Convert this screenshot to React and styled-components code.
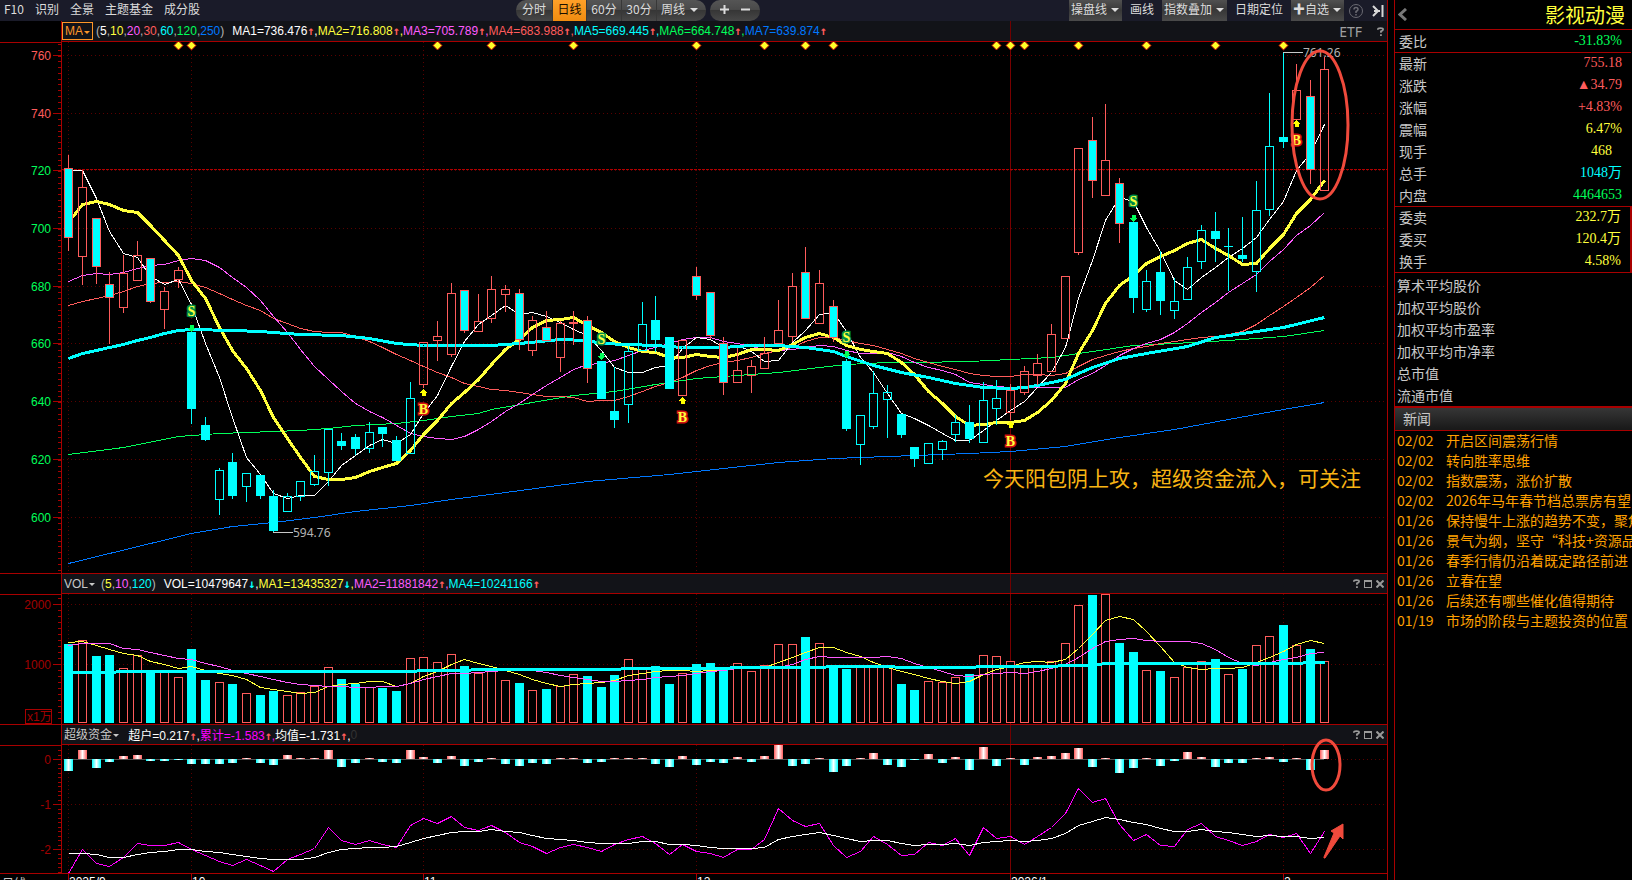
import { useId } from "react";
import styled, { createGlobalStyle, css } from "styled-components";

const RED = "#ff5c5c";
const CYAN = "#00ffff";
const YELLOW = "#ffff3c";
const MAGENTA = "#ff5cff";
const GREEN = "#00ff5a";
const BLUE = "#0078ff";
const WHITE = "#ffffff";
const LINE = "#a80000";
const GRID = "#5a0000";

const GlobalStyle = createGlobalStyle`
* {
  box-sizing: border-box;
}
body {
  margin: 0;
  background: #000;
  color: #c8c8c8;
  font-family: "Noto Sans CJK SC", sans-serif;
  font-size: 12px;
  overflow: hidden;
}
button, select {
  font: inherit;
  color: inherit;
  background: none;
  border: 0;
  padding: 0;
  margin: 0;
}
`;

/* ---------- layout ---------- */

const Page = styled.div`
display: flex;
height: 100vh;
overflow: hidden;
`;

const Main = styled.main`
flex: 1;
min-width: 0;
position: relative;
border-right: 1px solid ${LINE};
overflow: hidden;
`;

const Toolbar = styled.div`
display: flex;
height: 21px;
background: #1a1b29;
color: #dcdcdc;
line-height: 18px;
`;

const Links = styled.nav`
flex: 0 0 516px;
display: flex;
gap: 11px;
padding-left: 4px;

a {
  color: inherit;
  text-decoration: none;
}
`;

const Pill = styled.div`
display: flex;
height: 21px;
margin-right: 4px;
border-radius: 10px;
overflow: hidden;
background: linear-gradient(#555 0, #4a4a4a 45%, #363636 50%, #484848 100%);
`;

const PillButton = styled.button`
width: ${({ $width }) => $width || 35}px;
line-height: 18px;
padding-bottom: 3px;
border-right: 1px solid #383838;
${({ $active }) =>
  $active &&
  css`
    color: #1a1000;
    background: linear-gradient(#ffa028, #f08c10);
  `}
`;

const ZoomButton = styled.button`
width: 21px;
height: 19px;
display: flex;
align-items: center;
justify-content: center;
&:first-child { margin-left: 4px; }
&:last-child { margin-right: 4px; }
`;

const ToolbarRight = styled.div`
margin-left: auto;
display: flex;
`;

const selectKinds = {
  bar: css`
    height: 21px;
    align-items: flex-start;
    padding: 0 2px;
    background: linear-gradient(#505050, #383838 50%, #4a4a4a);
    select { padding-right: 12px; }
    &::after { right: 3px; }
  `,
  pill: css`
    height: 21px;
    align-items: flex-start;
    padding: 0 8px 0 4px;
    select { padding-right: 12px; }
    &::after { right: 8px; }
  `,
  boxed: css`
    height: 18px;
    margin-right: 3px;
    padding: 0 1px 0 2px;
    border: 1px solid #ff9628;
    &::after { right: 2px; }
  `,
  plain: css`
    padding: 0 4px 0 2px;
    &::after { right: 6px; }
  `,
};

const SelectWrap = styled.label`
position: relative;
display: inline-flex;
align-items: center;
color: ${({ $color }) => $color || "inherit"};

select {
  appearance: none;
  outline: none;
  line-height: 18px;
  padding-right: 8px;
}

&::after {
  content: "";
  position: absolute;
  top: 8px;
  border: ${({ $kind }) => ($kind === "bar" || $kind === "pill" ? 4 : 3)}px solid transparent;
  border-top-color: currentColor;
  border-bottom-width: 0;
  pointer-events: none;
}

${({ $kind }) => selectKinds[$kind || "plain"]}
`;

const FlatButton = styled.button`
padding: 0 8px 3px;
line-height: 18px;
`;

const IconButton = styled.button`
display: flex;
align-items: center;
justify-content: center;
width: ${({ $width }) => $width || 12}px;
color: ${({ $color }) => $color || "#9a9a9a"};
`;

const Panel = styled.section`
display: grid;
grid-template-columns: 62px minmax(0, 1fr);
border-bottom: 1px solid ${LINE};
`;

const AxisColumn = styled.div`
border-right: 1px solid ${LINE};
padding-top: ${({ $top }) => $top}px;

svg {
  display: block;
  border-top: 1px solid ${LINE};
}
`;

const PanelHeader = styled.header`
display: flex;
align-items: center;
height: ${({ $height }) => $height}px;
background: linear-gradient(#700000, #700000) 948px 0 / 1px 100% no-repeat, #121318;
border-bottom: 1px solid ${LINE};
font-family: "Liberation Sans", "Noto Sans CJK SC", sans-serif;
font-size: 12px;
white-space: pre;
`;

const Legend = styled.span`
color: ${({ $color }) => $color};
`;

const Arrow = styled(Legend)`
display: inline-block;
width: 7px;
font-family: "DejaVu Sans Mono", monospace;
font-weight: 700;
line-height: 14px;
`;

const Params = styled.span`
margin-right: 8px;
color: #b4b4b4;
`;

const HeaderTools = styled.div`
margin-left: auto;
display: flex;
padding-right: 1px;
`;

const Etf = styled.button`
font-family: "Noto Sans", sans-serif;
font-size: 14px;
color: #a0a0a0;
margin-right: 12px;
`;

const Plot = styled.svg`
display: block;
width: 100%;
height: ${({ $height }) => $height}px;
shape-rendering: crispEdges;
`;

const TimeAxis = styled.footer`
display: grid;
grid-template-columns: 62px minmax(0, 1fr);
align-items: start;
height: 20px;
`;

const Overlay = styled.svg`
position: absolute;
inset: 0;
width: 100%;
height: 100%;
pointer-events: none;
`;

/* ---------- side panel ---------- */

const Side = styled.aside`
flex: 0 0 238px;
margin-left: 6px;
border-left: 1px solid ${LINE};
overflow: hidden;
font-size: 14px;
`;

const SideTitle = styled.div`
display: flex;
align-items: center;
justify-content: space-between;
height: 30px;
padding: 0 7px 0 3px;
border-bottom: 1px solid ${LINE};

h1 {
  margin: 0;
  font-size: 20px;
  line-height: 28px;
  font-weight: 400;
  color: ${YELLOW};
}
`;

const QuoteTable = styled.table`
width: 100%;
border-collapse: collapse;

tbody {
  border-bottom: 1px solid ${LINE};
}
tbody:nth-child(3) {
  border-right: 2px solid ${LINE};
}
th, td {
  height: 22px;
  padding: 0;
  line-height: 20px;
}
th {
  padding-left: 4px;
  text-align: left;
  font-weight: 400;
}
`;

const QuoteValue = styled.td`
font-family: "Liberation Serif", "Noto Sans CJK SC", serif;
text-align: right;
color: ${({ $color }) => $color};
&& {
  padding-right: ${({ $inset }) => ($inset ? 19 : 9)}px;
}
`;

const Stats = styled.ul`
list-style: none;
margin: 0;
padding: 1px 0 0 2px;
height: 135px;
border-bottom: 2px solid ${LINE};
line-height: 22px;
`;

const NewsTitle = styled.h2`
margin: 0;
height: 23px;
padding-left: 8px;
line-height: 20px;
font-size: 14px;
font-weight: 400;
background: linear-gradient(#363636, #181818);
border-bottom: 1px solid ${LINE};
`;

const NewsList = styled.ul`
list-style: none;
margin: 0;
padding: 0 0 0 2px;
`;

const NewsLink = styled.a`
display: flex;
height: 20px;
line-height: 18px;
color: #ffa000;
text-decoration: none;
white-space: nowrap;

time {
  flex: 0 0 49px;
}
`;

/* ---------- data ---------- */

// kind, body top, body bottom, high, low
// r: rising, f: falling with red edge, c: solid cyan, h: hollow cyan
const candles = [
  ["f", 168, 238, 155, 251], ["r", 187, 257, 170, 285], ["f", 218, 267, 218, 284],
  ["f", 284, 298, 272, 344], ["r", 273, 308, 255, 313], ["r", 255, 281, 241, 281],
  ["f", 258, 302, 258, 303], ["r", 291, 310, 287, 329], ["r", 270, 280, 267, 288],
  ["c", 332, 409, 329, 424], ["c", 425, 440, 417, 441], ["h", 470, 500, 468, 515],
  ["c", 462, 496, 453, 499], ["h", 473, 487, 473, 502], ["c", 475, 496, 475, 499],
  ["c", 496, 531, 490, 532], ["h", 496, 512, 493, 512], ["h", 481, 497, 481, 501],
  ["h", 471, 485, 455, 486], ["h", 429, 473, 429, 486], ["c", 441, 446, 433, 450],
  ["c", 437, 449, 434, 455], ["h", 432, 449, 422, 453], ["c", 427, 434, 427, 447],
  ["c", 440, 461, 436, 461], ["h", 398, 454, 382, 454], ["r", 342, 385, 342, 388],
  ["r", 336, 341, 321, 361], ["r", 293, 355, 283, 357], ["f", 290, 331, 290, 333],
  ["r", 321, 332, 294, 332], ["r", 289, 319, 276, 323], ["r", 289, 295, 285, 312],
  ["f", 293, 340, 289, 350], ["r", 320, 351, 316, 356], ["f", 327, 341, 311, 341],
  ["r", 323, 358, 321, 372], ["r", 322, 324, 311, 345], ["f", 320, 369, 316, 383],
  ["c", 361, 399, 361, 399], ["c", 411, 420, 367, 428], ["h", 351, 405, 346, 423],
  ["h", 324, 351, 302, 351], ["c", 320, 340, 296, 352], ["c", 337, 389, 337, 389],
  ["r", 340, 396, 340, 396], ["f", 276, 296, 267, 300], ["f", 292, 336, 292, 339],
  ["f", 343, 383, 337, 395], ["r", 370, 383, 348, 383], ["r", 366, 376, 360, 393],
  ["r", 353, 369, 337, 369], ["r", 330, 344, 300, 344], ["r", 286, 337, 273, 342],
  ["f", 272, 319, 247, 319], ["r", 283, 324, 270, 324], ["f", 306, 338, 300, 342],
  ["c", 361, 429, 359, 431], ["h", 415, 445, 415, 465], ["h", 393, 427, 371, 429],
  ["h", 392, 400, 385, 438], ["c", 414, 435, 414, 438], ["c", 447, 459, 447, 467],
  ["h", 443, 464, 443, 464], ["h", 441, 450, 440, 460], ["h", 422, 435, 415, 442],
  ["c", 422, 439, 405, 443], ["h", 400, 443, 382, 443], ["h", 398, 409, 380, 425],
  ["r", 390, 413, 384, 420], ["r", 371, 393, 366, 395], ["r", 363, 376, 354, 385],
  ["r", 334, 372, 324, 372], ["r", 276, 339, 276, 339], ["r", 148, 253, 148, 255],
  ["f", 140, 181, 117, 198], ["r", 160, 196, 104, 196], ["f", 183, 224, 178, 243],
  ["c", 222, 298, 222, 313], ["h", 281, 310, 270, 312], ["c", 272, 301, 251, 315],
  ["h", 301, 311, 278, 319], ["h", 267, 300, 257, 300], ["h", 230, 262, 225, 269],
  ["c", 231, 239, 212, 262], ["c", 246, 247, 228, 291], ["c", 255, 259, 217, 262],
  ["h", 210, 272, 181, 292], ["h", 146, 210, 93, 216], ["c", 137, 142, 52, 148],
  ["r", 90, 120, 64, 120], ["f", 96, 170, 80, 184], ["r", 69, 191, 57, 191],
];

const ma1 = [
  170, 170, 198, 231, 253, 257, 276, 284, 279, 304, 343, 377, 417, 457, 474, 493, 498, 495, 495, 481,
  465, 455, 445, 439, 443, 434, 413, 395, 366, 341, 324, 315, 305, 314, 312, 316, 322, 329, 335, 350,
  367, 372, 372, 367, 365, 348, 337, 339, 347, 345, 351, 361, 360, 342, 330, 314, 312, 331, 357, 372,
  393, 413, 418, 425, 433, 440, 440, 430, 420, 410, 401, 387, 372, 347, 298, 260, 220, 197, 201, 227,
  251, 280, 289, 277, 267, 257, 248, 237, 219, 201, 170, 153, 124,
];
const ma2 = [
  222, 204, 201, 204, 210, 212, 225, 240, 255, 280, 298, 327, 350, 368, 390, 417, 438, 457, 476, 479,
  479, 477, 471, 467, 463, 450, 434, 420, 403, 392, 379, 364, 349, 339, 327, 320, 319, 317, 325, 332,
  341, 347, 351, 352, 357, 357, 354, 356, 357, 354, 349, 349, 350, 344, 337, 333, 337, 345, 349, 351,
  353, 362, 374, 391, 403, 416, 425, 424, 422, 422, 420, 412, 400, 383, 353, 330, 303, 285, 275, 263,
  256, 250, 243, 239, 248, 255, 264, 263, 248, 234, 213, 199, 180,
];
const ma3 = [
  281, 275, 273, 274, 272, 268, 265, 264, 260, 258, 260, 267, 277, 287, 300, 316, 332, 349, 366, 379,
  391, 403, 411, 417, 425, 433, 436, 438, 439, 436, 429, 421, 411, 403, 394, 385, 377, 369, 364, 363,
  360, 355, 350, 347, 343, 339, 337, 337, 341, 343, 346, 349, 350, 349, 347, 345, 346, 350, 353, 353,
  352, 356, 362, 367, 370, 374, 382, 384, 386, 387, 387, 387, 387, 387, 379, 373, 365, 355, 348, 343,
  339, 332, 323, 312, 302, 292, 283, 274, 261, 249, 235, 225, 212,
];
const ma4 = [
  305, 301, 298, 295, 291, 286, 283, 282, 281, 283, 287, 293, 299, 305, 310, 318, 323, 328, 331, 332,
  332, 336, 341, 347, 354, 360, 366, 372, 377, 383, 386, 389, 390, 392, 394, 396, 396, 397, 401, 400,
  400, 396, 391, 386, 382, 377, 370, 365, 362, 360, 357, 353, 350, 347, 341, 337, 337, 340, 343, 345,
  349, 353, 358, 362, 366, 369, 373, 375, 376, 376, 374, 374, 375, 373, 366, 359, 355, 351, 348, 346,
  343, 341, 339, 337, 336, 334, 331, 324, 315, 306, 297, 287, 275,
];
// slow averages are kept as [bar, y] knots
const ma5 = [
  [0, 358], [1, 353], [2, 350], [3, 347], [4, 344], [5, 340], [6, 337], [7, 333], [8, 330], [9, 329],
  [12, 330], [14, 331], [15, 332], [17, 334], [20, 335], [22, 338], [24, 343], [26, 345], [31, 345],
  [33, 343], [36, 339], [38, 340], [39, 343], [41, 344], [43, 345], [45, 347], [48, 347], [50, 345],
  [52, 345], [54, 347], [56, 351], [57, 356], [59, 365], [61, 372], [63, 377], [65, 383], [67, 387],
  [69, 388], [70, 387], [71, 385], [73, 379], [74, 373], [75, 367], [77, 358], [79, 353], [82, 346],
  [84, 337], [87, 331], [89, 327], [92, 317],
];
const ma6 = [
  [0, 454], [4, 447], [8, 436], [11, 433], [17, 430], [19, 428], [21, 425], [24, 423], [26, 420],
  [28, 416], [30, 413], [31, 409], [34, 402], [37, 395], [40, 391], [43, 384], [46, 378], [49, 375],
  [52, 372], [55, 367], [57, 364], [60, 362], [62, 362], [66, 361], [69, 359], [72, 357], [75, 351],
  [78, 345], [81, 343], [85, 340], [89, 336], [92, 330],
];
const ma7 = [
  [0, 563], [3, 553], [6, 543], [9, 533], [12, 526], [15, 522], [18, 517], [21, 511], [25, 505],
  [28, 499], [32, 492], [38, 481], [44, 474], [48, 468], [52, 462], [56, 458], [60, 456], [66, 453],
  [69, 451], [73, 446], [77, 437], [81, 429], [85, 419], [89, 409], [92, 402],
];

const volumeTops = [
  644, 640, 656, 655, 668, 655, 671, 672, 677, 649, 680, 682, 684, 693, 695, 691, 695, 692, 686, 667,
  679, 684, 687, 688, 691, 658, 657, 662, 654, 666, 673, 670, 680, 683, 690, 689, 686, 674, 676, 687,
  675, 659, 669, 666, 684, 673, 664, 663, 669, 663, 671, 665, 644, 644, 637, 643, 667, 669, 667, 667,
  667, 684, 690, 681, 682, 677, 674, 655, 656, 661, 667, 667, 661, 643, 605, 595, 594, 643, 652, 670,
  671, 677, 667, 661, 659, 674, 669, 645, 636, 625, 645, 649, 661,
];
const fallingVolume = new Set([
  0, 2, 3, 6, 9, 10, 12, 14, 15, 20, 21, 23, 24, 29, 33, 35, 38, 39, 40, 43, 44, 46, 47, 48, 54, 56,
  57, 61, 62, 66, 75, 77, 78, 80, 84, 86, 89, 91,
]);
const volMa1 = [
  642, 641, 645, 649, 653, 655, 661, 664, 668, 666, 670, 673, 675, 679, 687, 689, 691, 693, 692, 686,
  684, 683, 681, 681, 686, 683, 676, 671, 664, 659, 663, 666, 670, 674, 679, 683, 686, 684, 683, 682,
  680, 675, 673, 671, 670, 670, 671, 670, 669, 667, 667, 667, 662, 657, 652, 647, 647, 652, 656, 662,
  667, 671, 674, 678, 681, 683, 681, 674, 669, 666, 662, 661, 662, 659, 648, 634, 620, 616, 619, 631,
  646, 662, 667, 669, 668, 668, 667, 662, 657, 651, 644, 640, 643,
];
const volMa2 = [
  645, 643, 643, 643, 648, 649, 652, 655, 658, 659, 663, 666, 670, 673, 676, 679, 682, 684, 685, 686,
  686, 687, 687, 686, 686, 683, 679, 676, 673, 673, 672, 671, 670, 670, 670, 672, 675, 677, 679, 681,
  681, 680, 679, 677, 676, 675, 673, 671, 670, 668, 667, 667, 667, 664, 659, 656, 657, 657, 657, 657,
  656, 658, 663, 667, 671, 675, 676, 674, 673, 672, 673, 671, 668, 664, 657, 648, 641, 639, 638, 640,
  641, 641, 641, 643, 649, 657, 663, 665, 662, 659, 657, 653, 652,
];
const volMa4 = [
  [0, 672], [3, 672], [4, 671], [25, 671], [26, 670], [29, 670], [30, 669], [40, 669], [41, 668],
  [48, 668], [49, 667], [55, 667], [56, 666], [60, 666], [61, 667], [66, 667], [67, 666], [72, 666],
  [73, 665], [75, 665], [76, 663], [90, 663], [91, 662], [92, 662],
];

const funds = [
  -12, 9, -9, -3, 3, 4, -2, -2, -1, -5, -5, -5, -4, 1, -4, -6, 4, 1, 1, 9, -8, -4, 1, -3, -4, 9, 2, -4,
  3, -7, -3, 1, -5, -7, -4, -5, 1, 1, -4, -3, 1, 1, 1, -5, -8, 3, -6, -3, -4, 2, -3, 3, 14, -7, -5, 1,
  -13, -7, 1, 6, -6, -8, -1, 5, -4, 2, -11, 12, -7, 1, -6, 2, 3, 6, 11, -8, 1, -14, -9, 1, -7, -2, 7,
  2, -8, -4, -4, 1, 2, -3, 1, -11, 9,
];
const fundTotal = [
  873, 849, 863, 866, 857, 843, 845, 845, 842, 849, 855, 861, 865, 859, 865, 871, 859, 854, 848, 827,
  840, 844, 840, 844, 847, 825, 818, 823, 816, 827, 830, 825, 832, 842, 846, 853, 847, 844, 847, 851,
  844, 839, 836, 843, 854, 844, 851, 853, 857, 849, 849, 839, 808, 820, 826, 823, 845, 857, 851, 836,
  844, 855, 854, 842, 845, 838, 855, 827, 838, 836, 844, 836, 827, 813, 788, 802, 798, 824, 840, 834,
  845, 846, 829, 823, 836, 840, 845, 841, 834, 837, 833, 853, 831,
];
const fundAverage = [
  853, 853, 854, 857, 857, 854, 852, 851, 849, 849, 851, 852, 854, 856, 858, 859, 859, 859, 857, 852,
  849, 848, 847, 847, 846, 842, 838, 835, 832, 831, 831, 829, 831, 832, 835, 838, 839, 840, 842, 843,
  843, 843, 841, 841, 844, 844, 845, 847, 848, 848, 848, 847, 839, 836, 834, 832, 835, 838, 841, 840,
  840, 843, 845, 844, 844, 843, 845, 842, 841, 840, 841, 840, 838, 833, 825, 821, 817, 819, 822, 824,
  828, 831, 831, 829, 831, 832, 834, 836, 835, 836, 836, 838, 837,
];

const eventBars = [8, 9, 27, 31, 37, 46, 51, 54, 56, 68, 69, 70, 74, 79, 84, 89];
const signals = [
  ["S", 9, 311], ["S", 39, 339], ["S", 57, 337], ["S", 78, 201],
  ["B", 26, 409], ["B", 45, 417], ["B", 69, 441], ["B", 90, 140],
];
const months = [[0, "2025/9"], [9, "10"], [26, "11"], [46, "12"], [69, "2026/1"], [89, "2"]];

const quotes = [
  [["委比", "-31.83%", GREEN]],
  [
    ["最新", "755.18", RED],
    ["涨跌", "▲34.79", RED],
    ["涨幅", "+4.83%", RED],
    ["震幅", "6.47%", YELLOW],
    ["现手", "468", YELLOW, true],
    ["总手", "1048万", CYAN],
    ["内盘", "4464653", GREEN],
  ],
  [
    ["委卖", "232.7万", YELLOW],
    ["委买", "120.4万", YELLOW],
    ["换手", "4.58%", YELLOW],
  ],
];
const stats = ["算术平均股价", "加权平均股价", "加权平均市盈率", "加权平均市净率", "总市值", "流通市值"];
const news = [
  ["02/02", "开启区间震荡行情"],
  ["02/02", "转向胜率思维"],
  ["02/02", "指数震荡，涨价扩散"],
  ["02/02", "2026年马年春节档总票房有望"],
  ["01/26", "保持慢牛上涨的趋势不变，聚焦"],
  ["01/26", "景气为纲，坚守“科技+资源品"],
  ["01/26", "春季行情仍沿着既定路径前进"],
  ["01/26", "立春在望"],
  ["01/26", "后续还有哪些催化值得期待"],
  ["01/19", "市场的阶段与主题投资的位置"],
];

/* ---------- drawing helpers ---------- */

const AXIS = 62;
const barX = (i) => 68 - AXIS + Math.ceil(i * 13.644);

function Line({ data, color, width = 1 }) {
  const points = data
    .map((p, i) => (Array.isArray(p) ? p : [i, p]))
    .map(([i, y]) => `${barX(i) + 0.5},${y + 0.5}`)
    .join(" ");
  return <polyline points={points} fill="none" stroke={color} strokeWidth={width} strokeLinejoin="round" />;
}

function Grid({ top, height, rows }) {
  return (
    <g stroke={GRID}>
      {rows.map((y) => (
        <line key={y} x1="1" x2="100%" y1={y + 0.5} y2={y + 0.5} strokeDasharray="1 3" />
      ))}
      {months.map(([i]) => (
        <line
          key={i}
          x1={barX(i) + 0.5}
          x2={barX(i) + 0.5}
          y1={top}
          y2={top + height}
          stroke={i === 69 ? "#780000" : GRID}
          strokeDasharray={i === 69 ? undefined : "1 3"}
        />
      ))}
    </g>
  );
}

function Candle({ i, candle: [kind, top, bottom, high, low] }) {
  const x = barX(i);
  const edge = kind === "r" || kind === "f" ? RED : CYAN;
  const solid = kind === "f" || kind === "c";
  return (
    <g stroke={edge}>
      {high < top && <line x1={x + 0.5} x2={x + 0.5} y1={high} y2={top} />}
      {low > bottom && <line x1={x + 0.5} x2={x + 0.5} y1={bottom} y2={low} />}
      {bottom - top < 2 ? (
        <line x1={x - 4} x2={x + 5} y1={top + 0.5} y2={top + 0.5} />
      ) : (
        <rect x={x - 3.5} y={top + 0.5} width="8" height={bottom - top - 1} fill={solid ? CYAN : "none"} />
      )}
    </g>
  );
}

function Signal({ kind, i, y }) {
  const x = barX(i) + 0.5;
  const buy = kind === "B";
  const arrowY = buy ? y - 20 : y + 14;
  const arrow = buy ? "0,0 4,4 2,4 2,7 -2,7 -2,4 -4,4" : "-2,0 2,0 2,3 4,3 0,7 -4,3 -2,3";
  return (
    <g>
      <polygon points={arrow} transform={`translate(${x} ${arrowY})`} fill={buy ? "#ffff00" : GREEN} />
      <text
        x={x}
        y={y + 5}
        textAnchor="middle"
        fontFamily="Liberation Serif, serif"
        fontSize="14"
        fontWeight="700"
        fill={YELLOW}
        stroke={buy ? "#d01010" : "#008c46"}
        strokeWidth="3"
        paintOrder="stroke"
      >
        {kind}
      </text>
    </g>
  );
}

function Axis({ top, height, labels, start, step, end }) {
  const ticks = [];
  for (let n = 0; start + n * step < end; n++) ticks.push(Math.round(start + n * step));
  return (
    <svg width="61" height={height + 1}>
      <g transform={`translate(0 ${-top - 1})`} shapeRendering="crispEdges">
        {ticks.map((y) => (
          <line key={y} x1="58" x2="61" y1={y + 0.5} y2={y + 0.5} stroke={LINE} />
        ))}
        {labels.map(([text, y, color]) => (
          <g key={text}>
            <line x1="53" x2="61" y1={y + 0.5} y2={y + 0.5} stroke={LINE} />
            <text x="51" y={y + 5} textAnchor="end" fontFamily="Liberation Sans, sans-serif" fontSize="12" fill={color}>
              {text}
            </text>
          </g>
        ))}
      </g>
      {labels[0][0] === "2000" && (
        <g>
          <rect x="25.5" y="114.5" width="26" height="14" fill="none" stroke={LINE} />
          <text x="27" y="126" fontFamily="Liberation Sans, Noto Sans CJK SC, sans-serif" fontSize="12" fill="#a00000">
            x1万
          </text>
        </g>
      )}
    </svg>
  );
}

const HelpIcon = () => (
  <svg width="7" height="9" viewBox="0 0 8 10" fill="none" stroke="currentColor" strokeWidth="2">
    <path d="M1 3V2.5Q1 1 4 1T7 2.5Q7 4 4.5 4.8V6.5M4.5 8v2" />
  </svg>
);
const MaxIcon = () => (
  <svg width="8" height="8" viewBox="0 0 8 8" fill="none" stroke="currentColor" shapeRendering="crispEdges">
    <path d="M0 1h8" strokeWidth="2" />
    <path d="M.5 1v6.5h7V1" />
  </svg>
);
const CloseIcon = () => (
  <svg width="8" height="8" viewBox="0 0 8 8" stroke="currentColor" strokeWidth="2">
    <path d="M.5.5l7 7M7.5.5l-7 7" />
  </svg>
);

const Up = () => <Arrow $color={RED}>↑</Arrow>;
const Down = () => <Arrow $color={CYAN}>↓</Arrow>;

function PanelTools() {
  return (
    <HeaderTools>
      <IconButton aria-label="帮助"><HelpIcon /></IconButton>
      <IconButton aria-label="最大化"><MaxIcon /></IconButton>
      <IconButton aria-label="关闭"><CloseIcon /></IconButton>
    </HeaderTools>
  );
}

function Select({ label, ...rest }) {
  return (
    <SelectWrap {...rest}>
      <select aria-label={label}>
        <option>{label}</option>
      </select>
    </SelectWrap>
  );
}

function ParamList({ items }) {
  return (
    <Params>
      (
      {items.map(([text, color], i) => (
        <span key={text}>
          {i > 0 && ","}
          <Legend $color={color}>{text}</Legend>
        </span>
      ))}
      )
    </Params>
  );
}

/* ---------- panels ---------- */

function TopBar() {
  return (
    <Toolbar>
      <Links>
        {["F10", "识别", "全景", "主题基金", "成分股"].map((name) => (
          <a href="#" key={name}>{name}</a>
        ))}
      </Links>
      <Pill>
        <PillButton $width={37}>分时</PillButton>
        <PillButton $width={34} $active>日线</PillButton>
        <PillButton>60分</PillButton>
        <PillButton>30分</PillButton>
        <Select label="周线" $kind="pill" />
      </Pill>
      <Pill>
        <ZoomButton aria-label="放大">
          <svg width="9" height="9" stroke="currentColor" strokeWidth="2"><path d="M4.5 0v9M0 4.5h9" /></svg>
        </ZoomButton>
        <ZoomButton aria-label="缩小">
          <svg width="9" height="9" stroke="currentColor" strokeWidth="2"><path d="M0 4.5h9" /></svg>
        </ZoomButton>
      </Pill>
      <ToolbarRight>
        <Select label="操盘线" $kind="bar" />
        <FlatButton>画线</FlatButton>
        <Select label="指数叠加" $kind="bar" />
        <FlatButton>日期定位</FlatButton>
        <Select label="✚自选" $kind="bar" />
        <IconButton $width={24} $color="#6a6a72" aria-label="帮助">
          <svg width="14" height="14" fill="none" stroke="currentColor">
            <circle cx="7" cy="7" r="6.5" />
            <path d="M5 5.5Q5 3.5 7 3.5T9 5.5Q9 6.500 7 7.5V9M7 10v1.5" strokeWidth="1.5" />
          </svg>
        </IconButton>
        <IconButton $width={19} $color="#d8d8d8" aria-label="收起">
          <svg width="12" height="12" fill="none" stroke="currentColor" strokeWidth="2">
            <path d="M1 1l5 5-5 5M2 6h6M10.5 0v12" />
          </svg>
        </IconButton>
      </ToolbarRight>
    </Toolbar>
  );
}

function PricePanel() {
  const top = 42;
  const height = 531;
  const labels = [760, 740, 720, 700, 680, 660, 640, 620, 600].map((price, n) => [
    String(price),
    [55, 113, 170, 228, 286, 343, 401, 459, 517][n],
    price > 720 ? RED : GREEN,
  ]);
  return (
    <Panel>
      <AxisColumn $top={21}>
        <Axis top={top} height={height - 1} labels={labels} start={44} step={5.775} end={572} />
      </AxisColumn>
      <div>
        <PanelHeader $height={21}>
          <Select label="MA" $color="#ff9628" $kind="boxed" />
          <ParamList
            items={[["5", WHITE], ["10", YELLOW], ["20", MAGENTA], ["30", RED], ["60", CYAN], ["120", GREEN], ["250", BLUE]]}
          />
          <Legend $color={WHITE}>MA1=736.476<Up />,</Legend>
          <Legend $color={YELLOW}>MA2=716.808<Up />,</Legend>
          <Legend $color={MAGENTA}>MA3=705.789<Up />,</Legend>
          <Legend $color={RED}>MA4=683.988<Up />,</Legend>
          <Legend $color={CYAN}>MA5=669.445<Up />,</Legend>
          <Legend $color={GREEN}>MA6=664.748<Up />,</Legend>
          <Legend $color={BLUE}>MA7=639.874<Up /></Legend>
          <HeaderTools>
            <Etf>ETF</Etf>
            <IconButton aria-label="帮助"><HelpIcon /></IconButton>
          </HeaderTools>
        </PanelHeader>
        <Plot $height={height}>
          <g transform={`translate(0 ${-top})`}>
            <Grid top={top} height={height} rows={labels.map((l) => l[1])} />
            <line x1="0" x2="100%" y1="169.5" y2="169.5" stroke="#b00000" strokeDasharray="3 1" />
            <Line data={ma7} color={BLUE} />
            <Line data={ma6} color={GREEN} />
            <Line data={ma4} color={RED} />
            <Line data={ma3} color={MAGENTA} />
            <Line data={ma1} color={WHITE} />
            <Line data={ma2} color={YELLOW} width={3} />
            <Line data={ma5} color={CYAN} width={3} />
            {candles.map((candle, i) => (
              <Candle key={i} i={i} candle={candle} />
            ))}
            {eventBars.map((i) => (
              <path
                key={i}
                d={`M${barX(i) + 0.5} 41l4.5 4.5-4.5 4.5-4.5-4.5z`}
                fill="#ffff28"
                stroke="#c00000"
                shapeRendering="auto"
              />
            ))}
            {signals.map(([kind, i, y]) => (
              <Signal key={i} kind={kind} i={i} y={y} />
            ))}
            <g stroke="#c8c8c8">
              <line x1={barX(89)} x2={barX(89) + 20} y1="52.5" y2="52.5" />
              <line x1={barX(15)} x2={barX(15) + 20} y1="532.5" y2="532.5" />
            </g>
            <g fill="#b4b4b4" fontFamily="Noto Sans, sans-serif" fontSize="12">
              <text x={barX(89) + 20} y="57">761.26</text>
              <text x={barX(15) + 20} y="537">594.76</text>
            </g>
            <text x="921" y="486" fill="#f8b414" fontFamily="Noto Sans CJK SC, sans-serif" fontSize="21">
              今天阳包阴上攻，超级资金流入，可关注
            </text>
          </g>
        </Plot>
      </div>
    </Panel>
  );
}

function VolumePanel() {
  const top = 594;
  const height = 130;
  return (
    <Panel>
      <AxisColumn $top={20}>
        <Axis
          top={top}
          height={height - 1}
          labels={[["2000", 604, "#a00000"], ["1000", 664, "#a00000"]]}
          start={598}
          step={6}
          end={722}
        />
      </AxisColumn>
      <div>
        <PanelHeader $height={20}>
          <Select label="VOL" />
          <ParamList items={[["5", YELLOW], ["10", MAGENTA], ["120", CYAN]]} />
          <Legend $color={WHITE}>VOL=10479647<Down />,</Legend>
          <Legend $color={YELLOW}>MA1=13435327<Down />,</Legend>
          <Legend $color={MAGENTA}>MA2=11881842<Up />,</Legend>
          <Legend $color={CYAN}>MA4=10241166<Up /></Legend>
          <PanelTools />
        </PanelHeader>
        <Plot $height={height}>
          <g transform={`translate(0 ${-top})`}>
            <Grid top={top} height={height} rows={[604, 664]} />
            {volumeTops.map((y, i) => (
              <rect
                key={i}
                x={barX(i) - 3.5}
                y={y + 0.5}
                width="8"
                height={722 - y}
                fill={fallingVolume.has(i) ? CYAN : "#000"}
                stroke={fallingVolume.has(i) ? CYAN : RED}
              />
            ))}
            <Line data={volMa1} color={YELLOW} />
            <Line data={volMa2} color={MAGENTA} />
            <Line data={volMa4} color={CYAN} width={3} />
          </g>
        </Plot>
      </div>
    </Panel>
  );
}

function FundPanel() {
  const id = useId();
  const top = 745;
  const height = 128;
  return (
    <Panel>
      <AxisColumn $top={20}>
        <Axis
          top={top}
          height={height - 1}
          labels={[["0", 759, "#a00000"], ["-1", 804, "#a00000"], ["-2", 849, "#a00000"]]}
          start={750}
          step={4.5}
          end={873}
        />
      </AxisColumn>
      <div>
        <PanelHeader $height={20}>
          <Select label="超级资金" />
          <Legend $color={WHITE}> 超户=0.217<Up />,</Legend>
          <Legend $color="#ff00ff">累计=-1.583<Up />,</Legend>
          <Legend $color={WHITE}>均值=-1.731<Up />,</Legend>
          <Legend $color="#323232">0</Legend>
          <PanelTools />
        </PanelHeader>
        <Plot $height={height}>
          <defs>
            {[["up", RED], ["down", CYAN]].map(([name, color]) => (
              <linearGradient key={name} id={id + name}>
                <stop offset="0" stopColor={color} />
                <stop offset="0.5" stopColor="#fff" />
                <stop offset="1" stopColor={color} />
              </linearGradient>
            ))}
          </defs>
          <g transform={`translate(0 ${-top})`}>
            <Grid top={top} height={height} rows={[759, 804, 849]} />
            <line x1={barX(0)} x2={barX(92)} y1="759.5" y2="759.5" stroke="#505050" />
            {funds.map((v, i) => (
              <rect
                key={i}
                x={barX(i) - 4}
                y={v > 0 ? 759 - v : 759}
                width="9"
                height={Math.abs(v)}
                fill={`url(#${id}${v > 0 ? "up" : "down"})`}
              />
            ))}
            <Line data={fundTotal} color="#ff00ff" />
            <Line data={fundAverage} color={WHITE} />
          </g>
        </Plot>
      </div>
    </Panel>
  );
}

function Marks() {
  return (
    <Overlay fill="none" stroke="#f04a3c" strokeWidth="3">
      <ellipse cx="1320" cy="125" rx="28" ry="74" />
      <ellipse cx="1326" cy="765" rx="14" ry="25" />
      <path d="M1343 824l-12 7 3 2-10 24v1h1l15-22 3 3z" fill="#f04a3c" strokeWidth="1" />
    </Overlay>
  );
}

function SidePanel() {
  return (
    <Side>
      <SideTitle>
        <IconButton $width={9} $color="#787878" aria-label="返回">
          <svg width="9" height="13" fill="none" stroke="currentColor" strokeWidth="3">
            <path d="M8 1L2 6.5l6 5.5" />
          </svg>
        </IconButton>
        <h1>影视动漫</h1>
      </SideTitle>
      <QuoteTable>
        {quotes.map((group, n) => (
          <tbody key={n}>
            {group.map(([name, value, color, inset]) => (
              <tr key={name}>
                <th scope="row">{name}</th>
                <QuoteValue $color={color} $inset={inset}>{value}</QuoteValue>
              </tr>
            ))}
          </tbody>
        ))}
      </QuoteTable>
      <Stats>
        {stats.map((name) => (
          <li key={name}>{name}</li>
        ))}
      </Stats>
      <NewsTitle>新闻</NewsTitle>
      <NewsList>
        {news.map(([date, title]) => (
          <li key={title}>
            <NewsLink href="#">
              <time>{date}</time>
              {title}
            </NewsLink>
          </li>
        ))}
      </NewsList>
    </Side>
  );
}

export default function App() {
  return (
    <>
      <GlobalStyle />
      <Page>
        <Main>
          <TopBar />
          <PricePanel />
          <VolumePanel />
          <FundPanel />
          <TimeAxis>
            <Select label="日线" />
            <Plot $height={20}>
              {months.map(([i, name]) => (
                <g key={i}>
                  <line x1={barX(i) + 0.5} x2={barX(i) + 0.5} y1="0" y2="20" stroke={LINE} />
                  <text x={barX(i) + 1} y="12" fill="#fff" fontFamily="Liberation Sans, sans-serif" fontSize="12">
                    {name}
                  </text>
                </g>
              ))}
            </Plot>
          </TimeAxis>
          <Marks />
        </Main>
        <SidePanel />
      </Page>
    </>
  );
}
